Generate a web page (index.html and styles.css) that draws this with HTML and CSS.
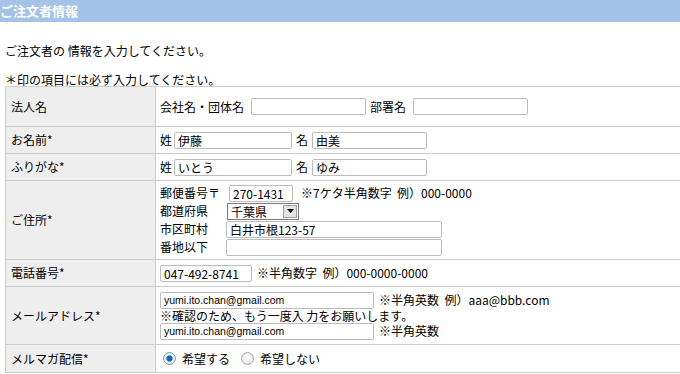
FILE: index.html
```html
<!DOCTYPE html>
<html lang="ja">
<head>
<meta charset="utf-8">
<title>ご注文者情報</title>
<link rel="stylesheet" href="styles.css">
</head>
<body>
<div class="header">ご注文者情報</div>
<p class="lead">ご注文者の 情報を入力してください。</p>
<p class="note">＊印の項目には必ず入力してください。</p>
<table class="form">
  <colgroup><col class="col-label"><col></colgroup>
  <tr class="r40">
    <th>法人名</th>
    <td><div class="line"><span class="lbl">会社名・団体名</span><input class="in w115" type="text"><span class="lbl">部署名</span><input class="in w115" type="text"></div></td>
  </tr>
  <tr class="r27">
    <th>お名前*</th>
    <td><div class="line"><span class="sei">姓</span><input class="in w118" type="text" value="伊藤"><span class="mei">名</span><input class="in w115" type="text" value="由美"></div></td>
  </tr>
  <tr class="r27">
    <th>ふりがな*</th>
    <td><div class="line"><span class="sei">姓</span><input class="in w118" type="text" value="いとう"><span class="mei">名</span><input class="in w115" type="text" value="ゆみ"></div></td>
  </tr>
  <tr class="r79">
    <th>ご住所*</th>
    <td>
      <div class="addr">
        <span>郵便番号〒</span>
        <div class="line"><input class="in w64 zip" type="text" value="270-1431"><span class="hint wide">※7ケタ半角数字&nbsp;&nbsp;例）000-0000</span></div>
        <span>都道府県</span>
        <div class="line"><span class="sel"><span class="sel-val">千葉県</span><span class="sel-btn"><svg width="7" height="4" viewBox="0 0 7 4"><path d="M0 0H7L3.5 4Z" fill="#000"/></svg></span></span></div>
        <span>市区町村</span>
        <div class="line"><input class="in w216" type="text" value="白井市根123-57"></div>
        <span>番地以下</span>
        <div class="line"><input class="in w216" type="text"></div>
      </div>
    </td>
  </tr>
  <tr class="r27">
    <th>電話番号*</th>
    <td><div class="line"><input class="in w92" type="text" value="047-492-8741"><span class="hint">※半角数字&nbsp;&nbsp;例）000-0000-0000</span></div></td>
  </tr>
  <tr class="r58">
    <th>メールアドレス*</th>
    <td>
      <div class="line"><input class="in w214 mail" type="text" value="yumi.ito.chan@gmail.com"><span class="hint">※半角英数&nbsp;&nbsp;例）aaa@bbb.com</span></div>
      <div class="confirm">※確認のため、もう一度入 力をお願いします。</div>
      <div class="line"><input class="in w214 mail" type="text" value="yumi.ito.chan@gmail.com"><span class="hint">※半角英数</span></div>
    </td>
  </tr>
  <tr class="r28">
    <th>メルマガ配信*</th>
    <td><div class="line radios"><label class="opt"><input class="radio" type="radio" name="mm" checked>希望する</label><label class="opt"><input class="radio" type="radio" name="mm">希望しない</label></div></td>
  </tr>
</table>
</body>
</html>
```

FILE: styles.css
```css
html, body {
  margin: 0;
  padding: 0;
  overflow: hidden;
  background: #fff;
}
body {
  font-family: "Noto Sans CJK JP", "Liberation Sans", sans-serif;
  font-size: 12px;
  color: #000;
  width: 680px;
}
.header {
  height: 22px;
  line-height: 22px;
  background: #a3c4e8;
  color: #fff;
  font-weight: bold;
  font-size: 13px;
  padding-left: 0;
}
.lead {
  margin: 23px 0 0 5px;
  line-height: 12px;
}
.note {
  margin: 17px 0 0 5px;
  line-height: 12px;
}
.form {
  margin-left: 5px;
  width: 700px;
  border-collapse: collapse;
  table-layout: fixed;
}
.col-label { width: 150px; }
.form th, .form td {
  border: 1px solid #cccccc;
  padding: 0 4px;
  vertical-align: middle;
  text-align: left;
  font-weight: normal;
  line-height: 12px;
}
.form th {
  background: #eeeeee;
  padding-left: 5px;
}
.r40 > * { height: 39px; }
.r27 > * { height: 26px; }
.r28 > * { height: 27px; }
.r79 > * { height: 78px; }
.r58 > * { height: 57px; }

.line {
  display: flex;
  align-items: center;
  gap: 4px;
}
.lbl { margin-right: 3px; }
.sei { margin-right: -2px; }
.mei { margin-left: 0; }
.in {
  box-sizing: border-box;
  height: 17px;
  border: 1px solid #bcbcbc;
  border-radius: 2px;
  padding: 0 3px;
  margin: 0;
  font-family: "Noto Sans CJK JP", sans-serif;
  font-size: 12px;
  color: #000;
  background: #fff;
}
.mail {
  font-family: "Liberation Sans", sans-serif;
  font-size: 10.5px;
}
.w115 { width: 115px; }
.w118 { width: 118px; }
.w64 { width: 64px; }
.w92 { width: 92px; }
.w214 { width: 214px; }
.w216 { width: 216px; }
.zip { margin-left: 3px; }
.hint { margin-left: 1px; }
.hint.wide { margin-left: 4px; }

.addr {
  display: grid;
  grid-template-columns: 66px auto;
  grid-auto-rows: 18px;
  align-items: center;
}
.sel {
  position: relative;
  display: inline-block;
  box-sizing: border-box;
  width: 72px;
  height: 17px;
  border: 1px solid #7a7a7a;
  background: #fff;
  margin-left: 1px;
}
.sel-val {
  display: block;
  line-height: 15px;
  padding-left: 3px;
}
.sel-btn {
  position: absolute;
  right: 1px;
  top: 1px;
  width: 14px;
  height: 13px;
  box-sizing: border-box;
  background: #e4e4e4;
  border: 1px solid #a0a0a0;
  display: flex;
  align-items: center;
  justify-content: center;
}
.confirm {
  line-height: 14px;
  margin: 0;
}

.radios { gap: 0; padding-left: 3px; }
.opt {
  display: inline-flex;
  align-items: center;
  margin-right: 11px;
}
.radio {
  appearance: none;
  -webkit-appearance: none;
  width: 13px;
  height: 13px;
  margin: 0 6px 0 0;
  border-radius: 50%;
  border: 1px solid #a9a9a9;
  background: radial-gradient(circle at 50% 45%, #ffffff 0, #e8e8e8 70%, #d4d4d4 100%);
  box-sizing: border-box;
}
.radio:checked {
  border-color: #7a9cc0;
  background: radial-gradient(circle, #1a6fc7 0, #0c58a8 2.5px, #dfe8f2 3.5px, #f4f7fb 100%);
}
```
